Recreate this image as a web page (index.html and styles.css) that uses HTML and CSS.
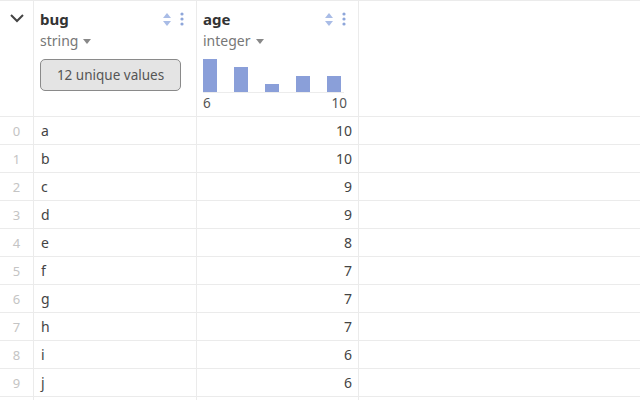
FILE: index.html
```html
<!DOCTYPE html>
<html>
<head>
<meta charset="utf-8">
<link rel="stylesheet" href="styles.css">
</head>
<body>
<div class="grid">
  <div class="cell head idx-head">
    <svg class="chev" width="16" height="10" viewBox="0 0 16 10"><path d="M2 2 L8 8 L14 2" fill="none" stroke="#444" stroke-width="2"/></svg>
  </div>
  <div class="cell head col">
    <div class="title-row">
      <span class="title">bug</span>
      <span class="icons">
        <svg width="8" height="13" viewBox="0 0 8 13"><path d="M4 0 L8 5 L0 5 Z" fill="#a9bce6"/><path d="M4 13 L8 8 L0 8 Z" fill="#a9bce6"/></svg>
        <svg width="4" height="14" viewBox="0 0 4 14"><circle cx="2" cy="2" r="1.6" fill="#8ea6da"/><circle cx="2" cy="7" r="1.6" fill="#8ea6da"/><circle cx="2" cy="12" r="1.6" fill="#8ea6da"/></svg>
      </span>
    </div>
    <div class="type">string <span class="caret"></span></div>
    <div class="uniq">12 unique values</div>
  </div>
  <div class="cell head col">
    <div class="title-row">
      <span class="title">age</span>
      <span class="icons">
        <svg width="8" height="13" viewBox="0 0 8 13"><path d="M4 0 L8 5 L0 5 Z" fill="#a9bce6"/><path d="M4 13 L8 8 L0 8 Z" fill="#a9bce6"/></svg>
        <svg width="4" height="14" viewBox="0 0 4 14"><circle cx="2" cy="2" r="1.6" fill="#8ea6da"/><circle cx="2" cy="7" r="1.6" fill="#8ea6da"/><circle cx="2" cy="12" r="1.6" fill="#8ea6da"/></svg>
      </span>
    </div>
    <div class="type">integer <span class="caret"></span></div>
    <div class="hist">
      <div class="bars">
        <div class="bar" style="height:33px"></div>
        <div class="bar" style="height:25px"></div>
        <div class="bar" style="height:8px"></div>
        <div class="bar" style="height:16px"></div>
        <div class="bar" style="height:16px"></div>
      </div>
      <div class="axis"><span>6</span><span>10</span></div>
    </div>
  </div>
  <div class="cell head fill"></div>

  <div class="cell idx">0</div><div class="cell txt">a</div><div class="cell num">10</div><div class="cell fill"></div>
  <div class="cell idx">1</div><div class="cell txt">b</div><div class="cell num">10</div><div class="cell fill"></div>
  <div class="cell idx">2</div><div class="cell txt">c</div><div class="cell num">9</div><div class="cell fill"></div>
  <div class="cell idx">3</div><div class="cell txt">d</div><div class="cell num">9</div><div class="cell fill"></div>
  <div class="cell idx">4</div><div class="cell txt">e</div><div class="cell num">8</div><div class="cell fill"></div>
  <div class="cell idx">5</div><div class="cell txt">f</div><div class="cell num">7</div><div class="cell fill"></div>
  <div class="cell idx">6</div><div class="cell txt">g</div><div class="cell num">7</div><div class="cell fill"></div>
  <div class="cell idx">7</div><div class="cell txt">h</div><div class="cell num">7</div><div class="cell fill"></div>
  <div class="cell idx">8</div><div class="cell txt">i</div><div class="cell num">6</div><div class="cell fill"></div>
  <div class="cell idx">9</div><div class="cell txt">j</div><div class="cell num">6</div><div class="cell fill"></div>
  <div class="cell blank"></div><div class="cell blank"></div><div class="cell blank"></div><div class="cell blank fill"></div>
</div>
</body>
</html>
```

FILE: styles.css
```css
html, body {
  margin: 0;
  padding: 0;
  background: #fff;
  overflow: hidden;
  width: 640px;
  height: 400px;
}
body {
  font-family: "Noto Sans", "Open Sans", sans-serif;
  color: #444;
}
.grid {
  display: grid;
  grid-template-columns: 34px 163px 162px 1fr;
  grid-template-rows: 116px;
  grid-auto-rows: 28px;
  border-top: 1px solid #ebebeb;
}
.cell {
  border-right: 1px solid #ebebeb;
  border-bottom: 1px solid #ebebeb;
  box-sizing: border-box;
  min-width: 0;
}
.fill {
  border-right: none;
}
.head {
  height: 100%;
}
.idx-head {
  display: flex;
  justify-content: center;
  align-items: flex-start;
  padding-top: 12px;
}
.col {
  display: flex;
  flex-direction: column;
  padding: 7px 6px 0 6px;
}
.title-row {
  display: flex;
  justify-content: space-between;
  align-items: center;
  height: 22px;
}
.title {
  font-size: 15px;
  font-weight: bold;
  color: #333;
  line-height: 22px;
}
.icons {
  display: flex;
  align-items: center;
  gap: 9px;
  padding-right: 6px;
}
.icons svg {
  display: block;
}
.type {
  font-size: 14px;
  color: #777;
  line-height: 20px;
  height: 22px;
  display: flex;
  align-items: center;
  gap: 5px;
}
.caret {
  width: 0;
  height: 0;
  border-left: 4px solid transparent;
  border-right: 4px solid transparent;
  border-top: 5px solid #888;
  margin-top: 1px;
}
.uniq {
  margin-top: 7px;
  width: 141px;
  height: 32px;
  box-sizing: border-box;
  background: #e4e4e4;
  border: 1px solid #8a8a8a;
  border-radius: 5px;
  font-size: 13.5px;
  color: #555;
  display: flex;
  align-items: center;
  justify-content: center;
}
.hist {
  margin-top: 6px;
  width: 141px;
  display: flex;
  flex-direction: column;
}
.bars {
  height: 34px;
  display: flex;
  align-items: flex-end;
  gap: 17px;
  border-bottom: 1px solid #ececec;
}
.bar {
  width: 14px;
  background: #8a9fd9;
}
.axis {
  display: flex;
  justify-content: space-between;
  font-size: 13.5px;
  color: #555;
  line-height: 20px;
  margin-right: -3px;
}
.idx {
  font-size: 13px;
  color: #c4c4c4;
  display: flex;
  align-items: center;
  justify-content: center;
}
.txt {
  font-size: 14px;
  color: #444;
  display: flex;
  align-items: center;
  padding-left: 7px;
}
.num {
  font-size: 14px;
  color: #444;
  display: flex;
  align-items: center;
  justify-content: flex-end;
  padding-right: 6px;
}
```
